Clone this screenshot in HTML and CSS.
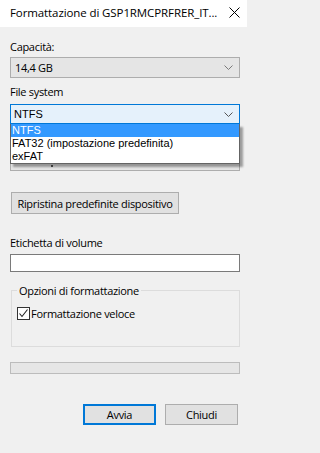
FILE: index.html
```html
<!DOCTYPE html>
<html lang="it">
<head>
<meta charset="utf-8">
<title>Formattazione</title>
<link rel="stylesheet" href="styles.css">
</head>
<body>
<div class="window">
  <div class="titlebar">
    <span class="title">Formattazione di GSP1RMCPRFRER_IT...</span>
    <svg class="close" width="11" height="11" viewBox="0 0 11 11"><path d="M0.5 0.5 L10.5 10.5 M10.5 0.5 L0.5 10.5" stroke="#000" stroke-width="1" fill="none"/></svg>
  </div>
  <div class="content">
    <div class="label l-cap">Capacità:</div>
    <div class="combo readonly">
      <span class="combo-text">14,4 GB</span>
      <svg class="chev" width="9" height="5" viewBox="0 0 9 5"><path d="M0.5 0.5 L4.5 4.5 L8.5 0.5" stroke="#7a7a7a" fill="none"/></svg>
    </div>
    <div class="label l-fs">File system</div>
    <div class="fs-wrap">
      <div class="combo focused">
        <span class="combo-text ms">NTFS</span>
        <svg class="chev" width="9" height="5" viewBox="0 0 9 5"><path d="M0.5 0.5 L4.5 4.5 L8.5 0.5" stroke="#555" fill="none"/></svg>
      </div>
      <ul class="dropdown">
        <li class="sel">NTFS</li>
        <li>FAT32 (impostazione predefinita)</li>
        <li>exFAT</li>
      </ul>
    </div>
    <div class="spacer-alloc"></div>
    <div class="combo readonly c-alloc"><span class="dot"></span></div>
    <button class="btn btn-reset">Ripristina predefinite dispositivo</button>
    <div class="label l-vol">Etichetta di volume</div>
    <div class="input"></div>
    <fieldset class="group">
      <legend>Opzioni di formattazione</legend>
      <div class="check-row">
        <span class="checkbox"><svg width="11" height="11" viewBox="0 0 11 11"><path d="M1.5 5.5 L4 8.5 L9.5 1.5" stroke="#222" stroke-width="1.1" fill="none"/></svg></span>
        <span class="check-label">Formattazione veloce</span>
      </div>
    </fieldset>
    <div class="progress"></div>
    <div class="buttons">
      <button class="btn btn-main default">Avvia</button>
      <button class="btn btn-main">Chiudi</button>
    </div>
  </div>
</div>
</body>
</html>
```
FILE: styles.css
```css
html, body {
  margin: 0;
  padding: 0;
  background: #f0f0f0;
}
.window {
  width: 247px;
  height: 453px;
  background: #f0f0f0;
  font-family: "Open Sans", "Noto Sans", sans-serif;
  font-size: 11px;
  letter-spacing: -0.3px;
  color: #000;
  overflow: hidden;
}
.titlebar {
  height: 27px;
  background: #fff;
  display: flex;
  align-items: center;
  padding: 0 7px 2px 10px;
  box-sizing: border-box;
}
.title {
  flex: 1;
  font-size: 11.5px;
  letter-spacing: -0.1px;
  white-space: nowrap;
  overflow: hidden;
}
.close {
  display: block;
  flex: none;
}
.content {
  padding: 0 7px 0 10px;
}
.label {
  height: 15px;
  line-height: 15px;
  white-space: nowrap;
}
.l-cap { margin-top: 12px; margin-bottom: 3px; }
.l-fs { margin-top: 6px; margin-bottom: 5px; }
.combo {
  height: 21px;
  box-sizing: border-box;
  border: 1px solid #adadad;
  display: flex;
  align-items: center;
  padding: 0 6px 0 4px;
}
.combo.readonly {
  background: #e5e5e5;
  border-color: #adadad;
}
.combo.focused {
  background: #e5f1fb;
  border-color: #0078d7;
  height: 20px;
  padding-left: 3px;
}
.combo-text {
  flex: 1;
  line-height: 15px;
}
.ms {
  font-family: "Liberation Sans", Arial, sans-serif;
  font-size: 11px;
  letter-spacing: 0;
}
.chev { display: block; margin-right: 0; }
.fs-wrap {
  position: relative;
}
.dropdown {
  position: absolute;
  left: 0;
  top: 20px;
  width: 228px;
  margin: 0;
  padding: 0;
  list-style: none;
  background: #fff;
  border: 1px solid #646464;
  border-top: none;
  box-shadow: 3px 3px 2px rgba(0,0,0,0.35);
  font-family: "Liberation Sans", Arial, sans-serif;
  font-size: 11px;
  letter-spacing: 0;
  z-index: 5;
}
.dropdown li {
  height: 13px;
  line-height: 13px;
  padding-left: 1px;
  white-space: nowrap;
}
.dropdown li.sel {
  background: #3399ff;
  color: #fff;
}
.spacer-alloc { height: 26px; }
.c-alloc { align-items: flex-end; padding-left: 40px; }
.dot {
  width: 2px;
  height: 2px;
  background: #555;
  margin-bottom: 3px;
}
.btn {
  font-family: "Open Sans", "Noto Sans", sans-serif;
  font-size: 11px;
  letter-spacing: -0.3px;
  background: #e1e1e1;
  border: 1px solid #adadad;
  color: #000;
  padding: 0;
  margin: 0;
  box-sizing: border-box;
  white-space: nowrap;
}
.btn-reset {
  display: block;
  margin-top: 21px;
  margin-left: 1px;
  width: 168px;
  height: 22px;
}
.l-vol { margin-top: 21px; margin-bottom: 4px; }
.input {
  height: 18px;
  box-sizing: border-box;
  background: #fff;
  border: 1px solid #7a7a7a;
}
.group {
  margin: 12px 0 0 1px;
  padding: 0 0 0 5px;
  height: 63px;
  box-sizing: border-box;
  border: 1px solid #dcdcdc;
}
.group legend {
  padding: 0 2px;
  margin-left: 0;
  line-height: 13px;
}
.check-row {
  display: flex;
  align-items: center;
  margin-top: 9px;
  gap: 1px;
}
.checkbox {
  width: 13px;
  height: 13px;
  box-sizing: border-box;
  border: 1px solid #333;
  background: #fff;
  display: flex;
  align-items: center;
  justify-content: center;
}
.checkbox svg { display: block; }
.check-label { line-height: 15px; }
.progress {
  margin-top: 15px;
  height: 12px;
  box-sizing: border-box;
  background: #e6e6e6;
  border: 1px solid #bcbcbc;
}
.buttons {
  display: flex;
  justify-content: flex-end;
  gap: 9px;
  margin-top: 30px;
  padding-right: 2px;
}
.btn-main {
  width: 73px;
  height: 21px;
}
.btn-main.default {
  border: 2px solid #0078d7;
}
```
